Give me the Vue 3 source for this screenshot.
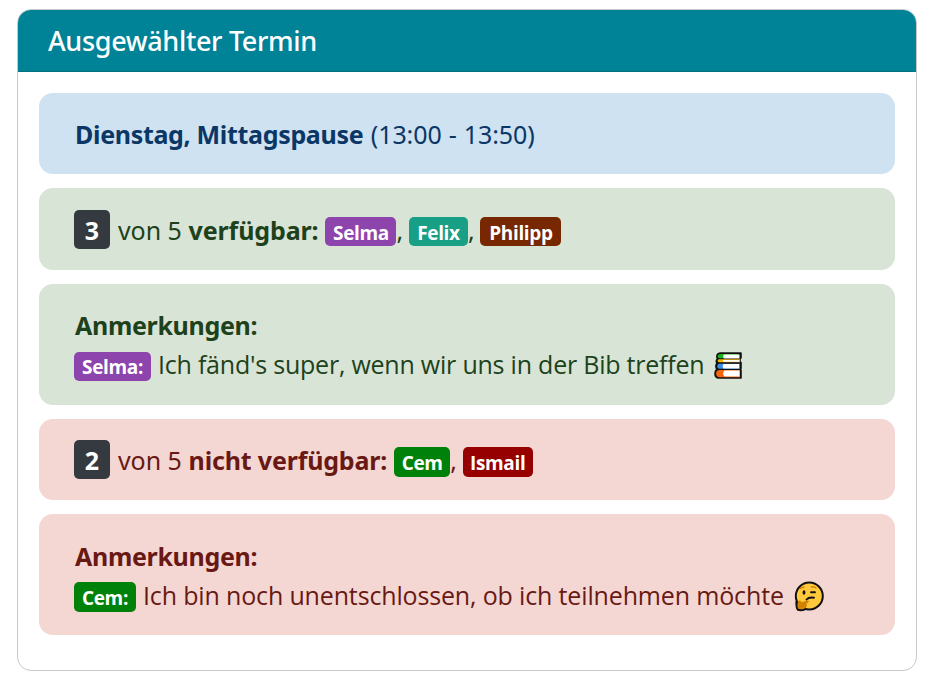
<script setup>
const available = [
  { name: 'Selma', tone: 'purple', width: 71 },
  { name: 'Felix', tone: 'teal', width: 59 },
  { name: 'Philipp', tone: 'brown', width: 81 },
]
const unavailable = [
  { name: 'Cem', tone: 'green', width: 56 },
  { name: 'Ismail', tone: 'red', width: 70 },
]
</script>

<template>
  <main class="page">
    <section class="card">
      <header class="card-header">Ausgewählter Termin</header>
      <div class="card-body">
        <div class="alert primary">
          <div class="line">
            <strong class="text slot">Dienstag, Mittagspause</strong>
            <span class="text time">(13:00 - 13:50)</span>
          </div>
        </div>

        <div class="alert success summary">
          <div class="line">
            <span class="count">3</span>
            <span class="text total">von 5</span>
            <strong class="text state">verfügbar:</strong>
            <span class="people">
              <template v-for="(p, i) in available" :key="p.name">
                <span class="badge" :class="p.tone" :style="{ width: p.width + 'px' }">{{ p.name }}</span>
                <span v-if="i < available.length - 1" class="text comma">,</span>
              </template>
            </span>
          </div>
        </div>

        <div class="alert success remarks">
          <div class="line"><strong class="text notes">Anmerkungen:</strong></div>
          <div class="line">
            <span class="badge purple selma-label">Selma:</span>
            <span class="text message">Ich fänd's super, wenn wir uns in der Bib treffen</span>
            <svg class="emoji" viewBox="0 0 28 27" width="28" height="27">
              <path d="M6 1h21v5h-1v4.500h1v6h-1V18h1v8H5c-3 0-4-2-4-4.500 0-2 .8-3.500 2-4.200-1.500-1.500-1.500-4.500 0-6C2 9.500 2 8 3.500 6.800 2 4.500 3 1 6 1z" fill="#111" stroke="#111" stroke-width="1.600" stroke-linejoin="round" />
              <path d="M26 2H7C2.500 2 3 6.300 6 6.300h4z" fill="#1bb51b" />
              <path d="M26 7.300H5c-1.800 0-1.800 3 0 3h21z" fill="#f7b500" />
              <path d="M26 11.700H5.500c-3 0-3 5 0 5H26z" fill="#3a8ee6" />
              <path d="M26 18H5.500c-4.500 0-4.500 7.200 0 7.200H26z" fill="#f7630c" />
              <path d="M10 2.500h15.500v3.900H10c-1-1-1-2.900 0-3.900zM9 8h16v1.800H9zM9.500 12.100h15.500v4.300H9.500c-1-1-1-3.300 0-4.300zM10.500 18.600h15v5.800h-15c-1.800-1.300-1.800-4.500 0-5.800z" fill="#fff" />
            </svg>
          </div>
        </div>

        <div class="alert danger">
          <div class="line">
            <span class="count">2</span>
            <span class="text total">von 5</span>
            <strong class="text state absent">nicht verfügbar:</strong>
            <span class="people">
              <template v-for="(p, i) in unavailable" :key="p.name">
                <span class="badge" :class="p.tone" :style="{ width: p.width + 'px' }">{{ p.name }}</span>
                <span v-if="i < unavailable.length - 1" class="text comma">,</span>
              </template>
            </span>
          </div>
        </div>

        <div class="alert danger summary">
          <div class="line"><strong class="text notes">Anmerkungen:</strong></div>
          <div class="line">
            <span class="badge green cem-label">Cem:</span>
            <span class="text message second">Ich bin noch unentschlossen, ob ich teilnehmen möchte</span>
            <svg class="emoji thinking" viewBox="0 0 30 31" width="30" height="31">
              <circle cx="15.300" cy="15" r="13.500" fill="#ffc83d" stroke="#111" stroke-width="2" />
              <path d="M4.500 20c1-1 2-.2 3.200 1.200l5.800-1.700c1.700 0 1.700 1.600.5 2.200l-1.500.8c1.300 3-1.500 6-5 6H4.500c-2-2-2-5.500 0-8.500z" fill="#d18200" />
              <path d="M2.300 20.500c0 4.500.2 7.300 1.700 8.300 2.500.8 4.500.6 7-.5" fill="none" stroke="#111" stroke-width="2" />
              <path d="M6 8c1.300-1.700 3-2 4.500-1.500M17 6c2-.7 4 0 5.500 1.200" fill="none" stroke="#d18200" stroke-width="1.400" />
              <ellipse cx="10" cy="11.500" rx="1.400" ry="2.300" fill="#111" />
              <path d="M17 11.300h4M12.500 18.500c2-2.300 4.500-2.200 7.500-1.800" fill="none" stroke="#111" stroke-width="1.900" stroke-linecap="round" />
            </svg>
          </div>
        </div>
      </div>
    </section>
  </main>
</template>

<style>
body {
  background: #fff;
}
</style>

<style scoped>
.page {
  box-sizing: border-box;
  width: 934px;
  height: 682px;
  padding: 9px 17px 11px;
  font-family: "Noto Sans", "Open Sans", sans-serif;
  font-size: 25px;
}
.card {
  box-sizing: border-box;
  height: 662px;
  border: 1px solid #c8c9cc;
  border-radius: 14px;
  overflow: hidden;
}
.card-header {
  box-sizing: border-box;
  height: 62px;
  padding-left: 30px;
  border-bottom: 1px solid #047183;
  background: #008297;
  color: #fff;
  font-size: 27px;
  font-weight: 550;
  line-height: 62px;
  letter-spacing: -0.33px;
}
.card-body {
  display: flex;
  flex-direction: column;
  gap: 14px;
  padding: 21px;
}
.alert {
  box-sizing: border-box;
  padding: 21px 35px;
  border-radius: 14px;
}
.summary {
  padding-top: 22px;
}
.remarks {
  padding-bottom: 22px;
}
.primary {
  background: #cfe2f1;
  color: #0a3766;
}
.success {
  background: #d8e4d6;
  color: #1d421b;
}
.danger {
  background: #f4d7d3;
  color: #691913;
}
.line {
  display: flex;
  align-items: baseline;
  height: 39px;
  white-space: nowrap;
}
.text {
  padding-top: 2px;
  line-height: 37px;
}
.slot {
  margin-left: 1px;
  letter-spacing: -0.32px;
}
.time {
  margin-left: 7.500px;
  letter-spacing: -0.1px;
  word-spacing: 0.7px;
}
.count {
  width: 36px;
  padding-top: 2px;
  border-radius: 5px;
  background: #343a40;
  color: #fff;
  font-weight: 700;
  line-height: 37px;
  text-align: center;
}
.total {
  margin-left: 8px;
  letter-spacing: -0.1px;
}
.state {
  margin-left: 7px;
  letter-spacing: -0.12px;
}
.absent {
  letter-spacing: -0.17px;
}
.people {
  display: flex;
  align-items: baseline;
  margin-left: 7px;
}
.comma {
  width: 12.500px;
}
.badge {
  box-sizing: border-box;
  height: 29px;
  padding-top: 2px;
  border-radius: 5px;
  color: #fff;
  font-family: "Open Sans", sans-serif;
  font-size: 19px;
  font-weight: 700;
  line-height: 27px;
  letter-spacing: -0.35px;
  text-align: center;
}
.people .badge {
  padding-top: 3px;
}
.danger .badge {
  height: 30px;
  padding-top: 3px;
}
.purple {
  background: #8e44ad;
}
.teal {
  background: #17a086;
}
.brown {
  background: #782800;
}
.green {
  background: #00820a;
}
.red {
  background: #960000;
}
.notes {
  margin-left: 1px;
  letter-spacing: -0.32px;
}
.selma-label {
  width: 77px;
}
.cem-label {
  width: 62px;
}
.message {
  margin-left: 7px;
  font-family: "Open Sans", sans-serif;
  letter-spacing: -0.22px;
}
.second {
  letter-spacing: -0.15px;
}
.emoji {
  flex: none;
  align-self: flex-start;
  margin: 8px 0 0 10px;
}
.thinking {
  margin-top: 6px;
}
</style>
